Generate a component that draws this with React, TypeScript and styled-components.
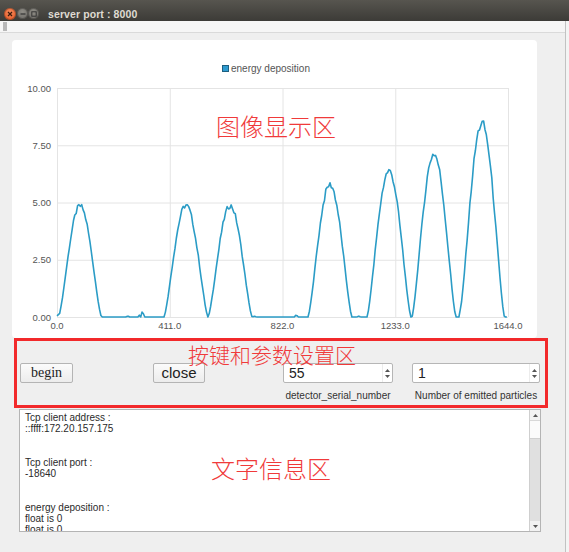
import React from 'react';
import styled, { createGlobalStyle } from 'styled-components';

const GlobalStyle = createGlobalStyle`
  html, body { margin: 0; padding: 0; background: #f4f4f4; }
  body {
    width: 569px; height: 552px; overflow: hidden;
    font-family: "Liberation Sans", Arial, sans-serif;
  }
`;

const Page = styled.div`
  width: 569px;
  height: 552px;
  display: flex;
  flex-direction: column;
`;

const TitleBar = styled.div`
  height: 21px;
  flex: none;
  box-sizing: border-box;
  padding: 6px 0 0 4px;
  background: linear-gradient(#57554f, #3c3b37);
  display: flex;
  align-items: center;
`;

const WinButton = styled.span<{ $kind: 'close' | 'min' | 'max' }>`
  width: ${p => (p.$kind === 'close' ? 12 : 11)}px;
  height: ${p => (p.$kind === 'close' ? 12 : 11)}px;
  margin-right: ${p => (p.$kind === 'close' ? 1 : 0)}px;
  border-radius: 50%;
  flex: none;
  display: flex;
  align-items: center;
  justify-content: center;
  background: ${p =>
    p.$kind === 'close'
      ? 'radial-gradient(circle at 50% 35%, #f68a5c, #e2531f)'
      : 'radial-gradient(circle at 50% 35%, #8f8d86, #6a6863)'};
  box-shadow: inset 0 0 0 1px rgba(0,0,0,0.25);
`;

const Title = styled.span`
  margin-left: 9px;
  font-family: "Liberation Sans", Arial, sans-serif;
  font-weight: bold;
  font-size: 10.5px;
  color: #dfdbd2;
  letter-spacing: 0.1px;
`;

const Main = styled.div`
  width: 565px;
  flex: 1;
  background: #efefef;
  border-right: 1px solid #c2c2c2;
  display: flex;
  flex-direction: column;
`;

const ToolStrip = styled.div`
  height: 11px;
  flex: none;
  background: #f6f6f6;
  border-bottom: 1px solid #dadada;
  display: flex;
  align-items: center;
  padding-left: 3px;
`;

const Handle = styled.span`
  width: 4px;
  height: 9px;
  background-image: radial-gradient(circle, #b8b8b8 0.8px, transparent 1px);
  background-size: 2px 2px;
`;

const Body = styled.div`
  display: flex;
  flex-direction: column;
  padding: 7px 0 0 12px;
`;

const ChartPanel = styled.div`
  width: 525px;
  height: 298px;
  background: #ffffff;
  border-radius: 4px;
  position: relative;
  flex: none;
`;

const Annotation = styled.span<{ $x: number; $y: number; $size: number }>`
  position: absolute;
  left: ${p => p.$x}px;
  top: ${p => p.$y}px;
  font-family: "Noto Sans CJK SC", "Noto Sans CJK JP", sans-serif;
  font-weight: 300;
  font-size: ${p => p.$size}px;
  line-height: ${p => p.$size}px;
  color: #f03a3a;
  white-space: nowrap;
  pointer-events: none;
`;

const ControlBox = styled.div`
  margin-left: 2px;
  width: 534px;
  height: 70px;
  box-sizing: border-box;
  border: 3px solid #f2292b;
  padding: 22px 0 0 3px;
  display: flex;
  align-items: flex-start;
  position: relative;
  flex: none;
`;

const PushButton = styled.button<{ $w: number; $gap: number; $serif?: boolean }>`
  width: ${p => p.$w}px;
  height: 20px;
  margin: 0 0 0 ${p => p.$gap}px;
  padding: 0;
  box-sizing: border-box;
  border: 1px solid #b4b4b4;
  border-radius: 2px;
  background: linear-gradient(#fbfbfb, #ececec);
  font-family: ${p => (p.$serif ? '"Liberation Serif", "Times New Roman", serif' : '"Liberation Sans", Arial, sans-serif')};
  font-size: ${p => (p.$serif ? 14 : 15)}px;
  line-height: 18px;
  color: #222;
  flex: none;
`;

const Field = styled.div<{ $w: number; $gap: number }>`
  width: ${p => p.$w}px;
  margin-left: ${p => p.$gap}px;
  display: flex;
  flex-direction: column;
  align-items: center;
  flex: none;
`;

const SpinBox = styled.div`
  width: 100%;
  height: 20px;
  box-sizing: border-box;
  background: #ffffff;
  border: 1px solid #b6b6b6;
  border-radius: 2px;
  display: flex;
`;

const SpinValue = styled.span`
  flex: 1;
  padding-left: 5px;
  font-family: "Liberation Sans", Arial, sans-serif;
  font-size: 14px;
  line-height: 18px;
  color: #222;
`;

const SpinArrows = styled.span`
  width: 9px;
  display: flex;
  flex-direction: column;
  justify-content: center;
  align-items: center;
  gap: 3px;
  border-left: 1px solid #ececec;
`;

const FieldLabel = styled.span`
  margin-top: 7px;
  font-size: 10px;
  line-height: 12px;
  color: #333;
  white-space: nowrap;
`;

const TextArea = styled.div`
  margin: 1px 0 0 7px;
  width: 522px;
  height: 123px;
  box-sizing: border-box;
  border: 1px solid #b4b4b4;
  background: #ffffff;
  display: flex;
  position: relative;
  flex: none;
`;

const TextContent = styled.div`
  flex: 1;
  padding: 1.5px 5px 0;
  font-size: 10px;
  line-height: 11.25px;
  color: #2a2a2a;
  white-space: pre;
  overflow: hidden;
`;

const ScrollBar = styled.div`
  width: 10px;
  border-left: 1px solid #cfcfcf;
  display: flex;
  flex-direction: column;
  background: #f2f2f2;
`;

const ScrollArrow = styled.div`
  height: 10px;
  display: flex;
  align-items: center;
  justify-content: center;
  flex: none;
`;

const ScrollThumb = styled.div`
  height: 17px;
  background: #fbfbfb;
  border-top: 1px solid #d8d8d8;
  border-bottom: 1px solid #d0d0d0;
  flex: none;
`;

const ScrollTrack = styled.div`
  flex: 1;
  background: #e0e0e0;
`;

const Tri = ({ up, size = 5 }: { up: boolean; size?: number }) => (
  <svg width={size} height={3} viewBox="0 0 5 3">
    <path d={up ? 'M0 3 L2.5 0 L5 3 Z' : 'M0 0 L2.5 3 L5 0 Z'} fill="#555" />
  </svg>
);

/* ---------- chart ---------- */
const CW = 525, CH = 298;
const PL = 45, PR = 496, PT = 48, PB = 277;
const XMAX = 1644, YMAX = 10;
const px = (x: number) => PL + (x / XMAX) * (PR - PL);
const py = (v: number) => PB - (v / YMAX) * (PB - PT);

const peaks = [
  { c: 84, a: 4.85, w: 78 },
  { c: 470, a: 4.88, w: 80 },
  { c: 631, a: 4.86, w: 80 },
  { c: 995, a: 5.78, w: 80 },
  { c: 1210, a: 6.38, w: 80 },
  { c: 1374, a: 7.12, w: 80 },
  { c: 1549, a: 8.45, w: 82 },
];
const bumps = [
  { c: 258, a: 0.05, w: 6 },
  { c: 300, a: 0.08, w: 5 },
  { c: 312, a: 0.36, w: 5 },
  { c: 720, a: 0.03, w: 8 },
  { c: 872, a: 0.1, w: 7 },
  { c: 1100, a: 0.04, w: 6 },
  { c: 1470, a: 0.15, w: 5 },
];

const hash = (i: number) => {
  const s = Math.sin(i * 12.9898) * 43758.5453;
  return s - Math.floor(s);
};

const series = (() => {
  const pts: string[] = [];
  let i = 0;
  for (let x = 10; x <= XMAX; x += 5, i++) {
    let v = 0;
    for (const p of peaks) {
      const d = Math.abs(x - p.c);
      if (d < p.w) {
        const base = Math.pow(Math.cos((Math.PI / 2) * (d / p.w)), 1.35);
        v += p.a * base * (1 + (hash(i) - 0.5) * 0.05);
      }
    }
    for (const b of bumps) {
      const d = Math.abs(x - b.c);
      if (d < b.w) v += b.a * (1 - d / b.w);
    }
    pts.push(`${px(x).toFixed(1)},${py(Math.max(0, v)).toFixed(1)}`);
  }
  return pts.join(' ');
})();

const xTicks = [0, 411, 822, 1233, 1644];
const yTicks = [0, 2.5, 5, 7.5, 10];

const Chart = () => (
  <svg width={CW} height={CH} viewBox={`0 0 ${CW} ${CH}`} style={{ display: 'block' }}>
    {yTicks.map(t => (
      <line key={`h${t}`} x1={PL} x2={PR} y1={py(t) + 0.5} y2={py(t) + 0.5} stroke="#e4e4e4" strokeWidth={1} />
    ))}
    {xTicks.map(t => (
      <line key={`v${t}`} x1={px(t) + 0.5} x2={px(t) + 0.5} y1={PT} y2={PB} stroke="#e4e4e4" strokeWidth={1} />
    ))}
    {yTicks.map(t => (
      <text key={`yl${t}`} x={PL - 6} y={py(t) + 3.5} textAnchor="end" fontFamily='"Liberation Sans", Arial, sans-serif' fontSize={9.5} fill="#555">
        {t.toFixed(2)}
      </text>
    ))}
    {xTicks.map(t => (
      <text key={`xl${t}`} x={px(t)} y={PB + 12} textAnchor="middle" fontFamily='"Liberation Sans", Arial, sans-serif' fontSize={9.5} fill="#555">
        {t.toFixed(1)}
      </text>
    ))}
    <rect x={210.5} y={25.5} width={6} height={6} fill="#2e9bd0" stroke="#1d5f80" strokeWidth={1} />
    <text x={219} y={32} fontFamily='"Liberation Sans", Arial, sans-serif' fontSize={10} fill="#555">
      energy deposition
    </text>
    <polyline points={`${px(0)},${py(0.05)} ${series}`} fill="none" stroke="#2b9cc6" strokeWidth={1.6} strokeLinejoin="round" />
  </svg>
);

const logText = [
  'Tcp client address :',
  '::ffff:172.20.157.175',
  '',
  '',
  'Tcp client port :',
  '-18640',
  '',
  '',
  'energy deposition :',
  'float is 0',
  'float is 0',
  'float is 0',
].join('\n');

export default function App() {
  return (
    <Page>
      <GlobalStyle />
      <TitleBar>
        <WinButton $kind="close">
          <svg width="6" height="6" viewBox="0 0 6 6">
            <path d="M1 1 L5 5 M5 1 L1 5" stroke="#3a1a0c" strokeWidth="1.2" />
          </svg>
        </WinButton>
        <WinButton $kind="min">
          <svg width="6" height="6" viewBox="0 0 6 6">
            <path d="M0.5 3 L5.5 3" stroke="#333" strokeWidth="1.2" />
          </svg>
        </WinButton>
        <WinButton $kind="max">
          <svg width="6" height="6" viewBox="0 0 6 6">
            <rect x="0.8" y="0.8" width="4.4" height="4.4" fill="none" stroke="#333" strokeWidth="1" />
          </svg>
        </WinButton>
        <Title>server port : 8000</Title>
      </TitleBar>
      <Main>
        <ToolStrip>
          <Handle />
        </ToolStrip>
        <Body>
          <ChartPanel>
            <Chart />
            <Annotation $x={204} $y={74} $size={24}>图像显示区</Annotation>
          </ChartPanel>
          <ControlBox>
            <Annotation $x={171} $y={3} $size={21}>按键和参数设置区</Annotation>
            <PushButton $w={53} $gap={0} $serif>begin</PushButton>
            <PushButton $w={52} $gap={80}>close</PushButton>
            <Field $w={110} $gap={78}>
              <SpinBox>
                <SpinValue>55</SpinValue>
                <SpinArrows><Tri up /><Tri up={false} /></SpinArrows>
              </SpinBox>
              <FieldLabel>detector_serial_number</FieldLabel>
            </Field>
            <Field $w={128} $gap={19}>
              <SpinBox>
                <SpinValue>1</SpinValue>
                <SpinArrows><Tri up /><Tri up={false} /></SpinArrows>
              </SpinBox>
              <FieldLabel>Number of emitted particles</FieldLabel>
            </Field>
          </ControlBox>
          <TextArea>
            <TextContent>{logText}</TextContent>
            <ScrollBar>
              <ScrollArrow><Tri up /></ScrollArrow>
              <ScrollThumb />
              <ScrollTrack />
              <ScrollArrow><Tri up={false} /></ScrollArrow>
            </ScrollBar>
            <Annotation $x={191} $y={46} $size={24}>文字信息区</Annotation>
          </TextArea>
        </Body>
      </Main>
    </Page>
  );
}
